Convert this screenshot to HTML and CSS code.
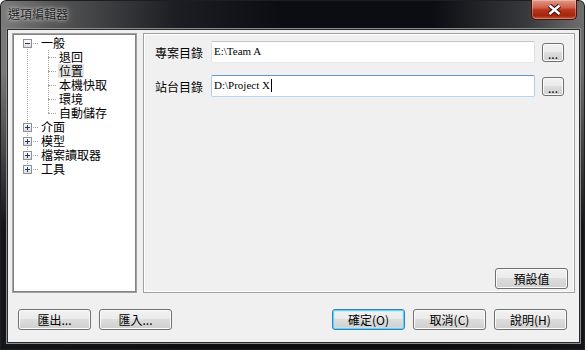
FILE: index.html
```html
<!DOCTYPE html>
<html lang="zh-Hant">
<head>
<meta charset="UTF-8" />
<title>選項編輯器</title>
<link rel="stylesheet" href="styles.css">
</head>
<body>
<div class="window">

    <div class="titlebar">
        <span class="title">選項編輯器</span>
        <button class="close-btn" title="關閉">
            <svg width="44" height="19" viewBox="0 0 44 19">
                <path d="M17.5 5.5 L27.5 14 M27.5 5.5 L17.5 14" stroke="#3b0d05" stroke-width="4.6" fill="none" />
                <path d="M17.5 5.5 L27.5 14 M27.5 5.5 L17.5 14" stroke="#fff" stroke-width="2.4" fill="none" />
            </svg>
        </button>
    </div>

    <div class="client">
        <div class="main">

            <!-- 分類樹 -->
            <div class="tree-box">
                <ul class="tree">
                    <li>
                        <div class="node"><span class="toggle minus"></span><span class="hdots"></span><span class="label">一般</span></div>
                        <ul class="children">
                            <li class="leaf"><span class="hdots"></span><span class="label">退回</span></li>
                            <li class="leaf"><span class="hdots"></span><span class="label selected">位置</span></li>
                            <li class="leaf"><span class="hdots"></span><span class="label">本機快取</span></li>
                            <li class="leaf"><span class="hdots"></span><span class="label">環境</span></li>
                            <li class="leaf"><span class="hdots"></span><span class="label">自動儲存</span></li>
                        </ul>
                    </li>
                    <li><div class="node"><span class="toggle plus"></span><span class="hdots"></span><span class="label">介面</span></div></li>
                    <li><div class="node"><span class="toggle plus"></span><span class="hdots"></span><span class="label">模型</span></div></li>
                    <li><div class="node"><span class="toggle plus"></span><span class="hdots"></span><span class="label">檔案讀取器</span></div></li>
                    <li><div class="node"><span class="toggle plus"></span><span class="hdots"></span><span class="label">工具</span></div></li>
                </ul>
            </div>

            <!-- 位置設定 -->
            <div class="panel">
                <div class="fields">
                    <label>專案目錄</label>
                    <div class="textbox">E:\Team A</div>
                    <button class="btn browse">...</button>

                    <label>站台目錄</label>
                    <div class="textbox focused">D:\Project X<span class="caret"></span></div>
                    <button class="btn browse">...</button>
                </div>
                <div class="panel-foot">
                    <button class="btn">預設值</button>
                </div>
            </div>

        </div>

        <div class="footer">
            <button class="btn">匯出...</button>
            <button class="btn">匯入...</button>
            <span class="spacer"></span>
            <button class="btn default">確定(O)</button>
            <button class="btn">取消(C)</button>
            <button class="btn">說明(H)</button>
        </div>
    </div>

</div>
</body>
</html>
```

FILE: styles.css
```css
body {
    margin: 0;
    background: #fff;
    font-family: "Noto Sans CJK TC", "Liberation Sans", sans-serif;
    font-size: 12px;
    color: #000;
}
.window {
    width: 585px;
    height: 350px;
    box-sizing: border-box;
    border-radius: 6px 6px 0 0;
    overflow: hidden;
    background:
        linear-gradient(to bottom, rgba(11,13,18,0) 0, rgba(11,13,18,0) 20%, rgba(11,13,18,0.92) 65%),
        linear-gradient(to right, #7c7c7c 0, #5a5a5a 8%, #1c1e23 30%, #0b0d12 48%, #0b0d12 74%, #38393c 90%, #707070 100%);
    box-shadow: inset 0 0 0 1px #1e1e1e;
}
/* Заголовок окна */
.titlebar {
    height: 30px;
    display: flex;
    align-items: flex-start;
    padding: 0 8px;
    box-sizing: border-box;
}
.title {
    margin-top: 6px;
    line-height: 16px;
    color: #1e1e1e;
    text-shadow: 0 0 3px rgba(255,255,255,0.75), 0 0 7px rgba(255,255,255,0.55);
}
.close-btn {
    margin-left: auto;
    width: 46px;
    height: 20px;
    padding: 0;
    border: 1px solid #4b1208;
    border-top: none;
    border-radius: 0 0 5px 5px;
    background: linear-gradient(#e39a89 0%, #cf6049 40%, #b9341c 52%, #a3260f 82%, #c65a40 100%);
    box-shadow: inset 0 0 0 1px rgba(255,255,255,0.28);
    display: flex;
    align-items: center;
    justify-content: center;
}
/* Рабочая область */
.client {
    margin: 0 6px 0 8px;
    height: 312px;
    box-sizing: border-box;
    padding: 3px 4px 0 4px;
    background: #f0f0f0;
    box-shadow: 0 0 0 1px #2a2a2a, 0 0 0 2px #8c8c8c;
}
.main {
    display: flex;
    gap: 6px;
    height: 260px;
}
/* Дерево */
.tree-box {
    width: 125px;
    box-sizing: border-box;
    background: #fff;
    border: 1px solid #a0a0a0;
    box-shadow: inset 0 0 0 1px #838383;
    padding: 2px 0 0 1px;
}
.tree, .children {
    list-style: none;
    margin: 0;
    padding: 0;
}
.tree {
    background-image: repeating-linear-gradient(to bottom, #a0a0a0 0 1px, transparent 1px 2px);
    background-repeat: no-repeat;
    background-position: 13px 7px;
    background-size: 1px calc(100% - 14px);
}
.children {
    background-image: repeating-linear-gradient(to bottom, #a0a0a0 0 1px, transparent 1px 2px);
    background-repeat: no-repeat;
    background-position: 34px 0;
    background-size: 1px calc(100% - 7px);
}
.node, .leaf {
    display: flex;
    align-items: center;
    height: 14px;
    line-height: 14px;
    white-space: nowrap;
}
.node {
    padding-left: 9px;
}
.leaf {
    padding-left: 34px;
}
.toggle {
    width: 9px;
    height: 9px;
    box-sizing: border-box;
    border: 1px solid #919191;
    background: linear-gradient(#fff, #dcdcdc);
}
.toggle.minus {
    background:
        linear-gradient(#1f3b73, #1f3b73) center / 5px 1px no-repeat,
        linear-gradient(#fff, #dcdcdc);
}
.toggle.plus {
    background:
        linear-gradient(#1f3b73, #1f3b73) center / 5px 1px no-repeat,
        linear-gradient(#1f3b73, #1f3b73) center / 1px 5px no-repeat,
        linear-gradient(#fff, #dcdcdc);
}
.hdots {
    width: 5px;
    height: 0;
    border-top: 1px dotted #a0a0a0;
    margin-left: 1px;
}
.leaf .hdots {
    width: 8px;
    margin-left: 0;
}
.label {
    margin-left: 2px;
    padding: 0 1px;
}
.label.selected {
    background: #e3e3e3;
}
/* Панель настроек */
.panel {
    flex: 1;
    display: flex;
    flex-direction: column;
    border: 1px solid #a0a0a0;
    box-shadow: inset 0 0 0 1px #fff;
    padding: 7px 10px 3px 11px;
}
.fields {
    display: grid;
    grid-template-columns: 56px 1fr auto;
    grid-auto-rows: 22px;
    row-gap: 12px;
    align-items: center;
}
.textbox {
    height: 22px;
    box-sizing: border-box;
    background: #fff;
    border: 1px solid;
    border-color: #c4c6cb #dbdfe6 #e3e9ef #dbdfe6;
    border-radius: 2px;
    padding: 2px 2px 0 2px;
    font-family: "Liberation Serif", serif;
    font-size: 11px;
    line-height: 14px;
    white-space: nowrap;
}
.textbox.focused {
    border-color: #5d97d2 #a9cbed #b7d5f0 #a9cbed;
}
.caret {
    display: inline-block;
    width: 1px;
    height: 13px;
    background: #000;
    vertical-align: -3px;
    margin-left: 1px;
}
.panel-foot {
    margin-top: auto;
    margin-right: -4px;
    display: flex;
    justify-content: flex-end;
}
/* Кнопки */
.btn {
    width: 73px;
    height: 21px;
    box-sizing: border-box;
    padding: 0;
    border: 1px solid #707070;
    border-radius: 3px;
    background: linear-gradient(#f2f2f2 0%, #ebebeb 45%, #dddddd 50%, #cfcfcf 100%);
    box-shadow: inset 0 0 0 1px #fbfbfb;
    font-family: inherit;
    font-size: 12px;
    line-height: 17px;
    color: #000;
}
.btn.default {
    border-color: #3c7fb1;
    box-shadow: inset 0 0 0 1px #5fd3f6, inset 0 0 0 2px rgba(180,235,252,0.6);
}
.btn.browse {
    width: 22px;
    height: 19px;
    margin-left: 7px;
    line-height: 20px;
}
.footer {
    display: flex;
    gap: 8px;
    margin-top: 16px;
    padding: 0 8px 0 6px;
}
.spacer {
    flex: 1;
}
```
